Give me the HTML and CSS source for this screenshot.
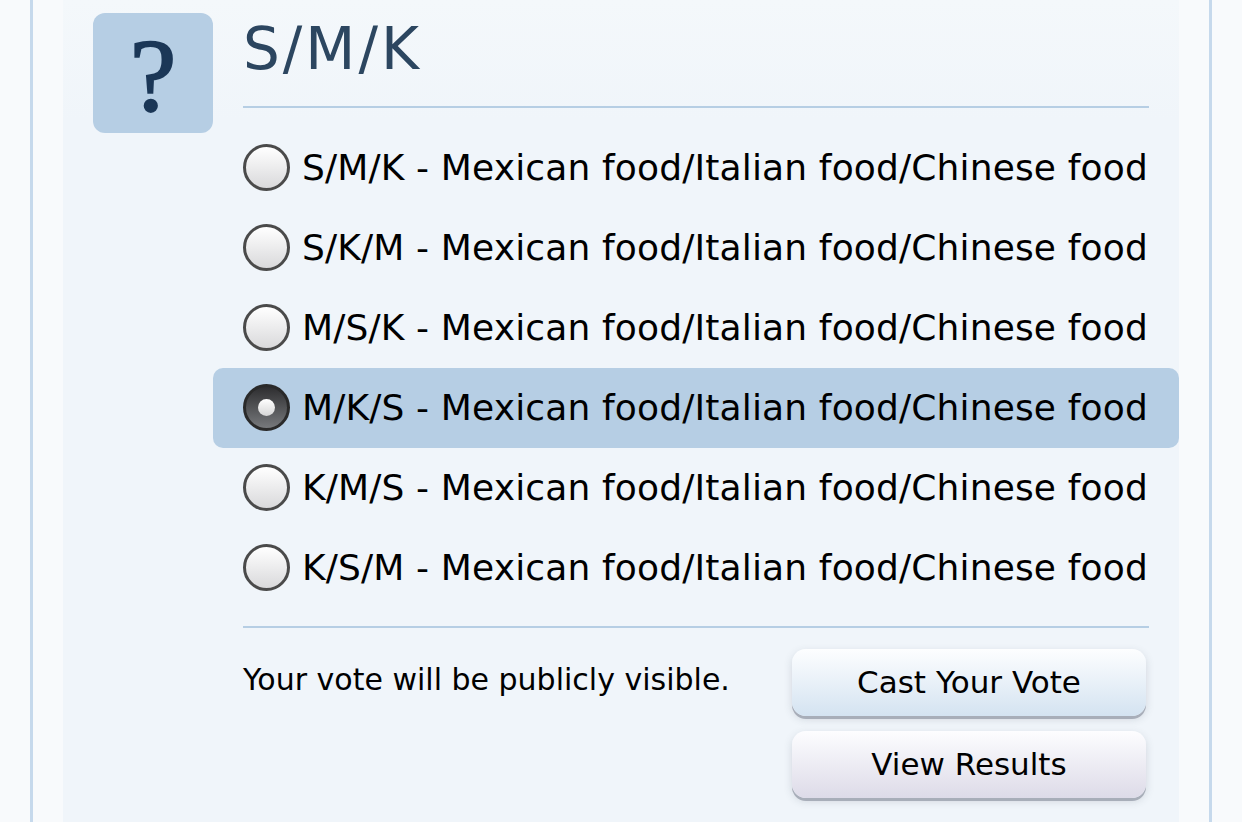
FILE: index.html
```html
<!DOCTYPE html>
<html lang="en">
<head>
  <meta charset="UTF-8" />
  <meta name="viewport" content="width=device-width, initial-scale=1.0" />
  <title>Poll - S/M/K</title>
  <link rel="stylesheet" href="styles.css">
</head>
<body>

  <div class="page">
    <form class="poll">
      <div class="poll-icon">?</div>

      <div class="poll-body">
        <h2 class="poll-title">S/M/K</h2>

        <div class="options">
          <label class="option">
            <input type="radio" name="vote" value="1">
            <span class="radio"></span>
            <span>S/M/K - Mexican food/Italian food/Chinese food</span>
          </label>
          <label class="option">
            <input type="radio" name="vote" value="2">
            <span class="radio"></span>
            <span>S/K/M - Mexican food/Italian food/Chinese food</span>
          </label>
          <label class="option">
            <input type="radio" name="vote" value="3">
            <span class="radio"></span>
            <span>M/S/K - Mexican food/Italian food/Chinese food</span>
          </label>
          <label class="option selected">
            <input type="radio" name="vote" value="4" checked>
            <span class="radio"></span>
            <span>M/K/S - Mexican food/Italian food/Chinese food</span>
          </label>
          <label class="option">
            <input type="radio" name="vote" value="5">
            <span class="radio"></span>
            <span>K/M/S - Mexican food/Italian food/Chinese food</span>
          </label>
          <label class="option">
            <input type="radio" name="vote" value="6">
            <span class="radio"></span>
            <span>K/S/M - Mexican food/Italian food/Chinese food</span>
          </label>
        </div>

        <div class="poll-footer">
          <p class="note">Your vote will be publicly visible.</p>
          <div class="actions">
            <button type="button" class="btn btn-vote">Cast Your Vote</button>
            <button type="button" class="btn btn-results">View Results</button>
          </div>
        </div>
      </div>
    </form>
  </div>

</body>
</html>
```

FILE: styles.css
```css
body {
  margin: 0;
  font-family: "DejaVu Sans", Verdana, sans-serif;
  background-color: #f8fafc;
  color: #000;
  overflow: hidden;
}

.page {
  margin: 0 30px;
  padding: 0 30px;
  min-height: 100vh;
  border-left: 3px solid #c6d9ec;
  border-right: 3px solid #c6d9ec;
}

.poll {
  display: flex;
  gap: 30px;
  min-height: 100vh;
  padding: 13px 30px 24px;
  box-sizing: border-box;
  background: linear-gradient(#f4f8fb, #f0f5fa 120px);
}

.poll-icon {
  flex: none;
  width: 120px;
  height: 120px;
  border-radius: 12px;
  background-color: #b6cee4;
  color: #1b3757;
  font-family: "Liberation Serif", "Times New Roman", serif;
  font-size: 104px;
  line-height: 126px;
  text-align: center;
  -webkit-text-stroke: 2px #1b3757;
}

.poll-body {
  flex: 1;
}

.poll-title {
  margin: 0;
  padding: 2px 0 21px;
  border-bottom: 2px solid #b6cee4;
  font-size: 58px;
  font-weight: normal;
  line-height: 1.2;
  letter-spacing: 3px;
  color: #2c4660;
}

.options {
  margin: 20px 0 18px;
}

.option {
  display: flex;
  align-items: center;
  gap: 12px;
  height: 80px;
  margin: 0 -30px;
  padding: 0 30px;
  border-radius: 10px;
  font-size: 36px;
  letter-spacing: 0.15px;
  cursor: pointer;
}

.option.selected {
  background-color: #b6cee4;
}

.option input {
  display: none;
}

.radio {
  flex: none;
  position: relative;
  width: 41px;
  height: 41px;
  border: 3px solid #4a4a4a;
  border-radius: 50%;
  background: linear-gradient(#ffffff, #d9d9db);
}

.option input:checked + .radio {
  border-color: #2a2a2a;
  background: linear-gradient(#2e2e30, #77797c);
}

/* the white dot of the checked radio */
.option input:checked + .radio::after {
  content: '';
  position: absolute;
  top: 12px;
  left: 12px;
  width: 17px;
  height: 17px;
  border-radius: 50%;
  background: linear-gradient(#ffffff, #d6d6d6);
}

.poll-footer {
  display: flex;
  justify-content: space-between;
  padding-top: 21px;
  border-top: 2px solid #b6cee4;
}

.note {
  margin: 13px 0 0;
  font-size: 30px;
  line-height: 1.2;
}

.actions {
  display: flex;
  flex-direction: column;
  gap: 15px;
  margin-right: 3px;
}

.btn {
  width: 354px;
  height: 67px;
  border: none;
  border-radius: 14px;
  font-family: "DejaVu Sans", Verdana, sans-serif;
  font-size: 31px;
  color: #000;
  cursor: pointer;
  box-shadow: 0 3px 0 #a8aeb9, 0 3px 8px rgba(60, 70, 90, 0.18);
}

.btn-vote {
  background: linear-gradient(#fdfeff, #d4e3f1);
}

.btn-results {
  background: linear-gradient(#fdfdff, #dddbe8);
}
```
